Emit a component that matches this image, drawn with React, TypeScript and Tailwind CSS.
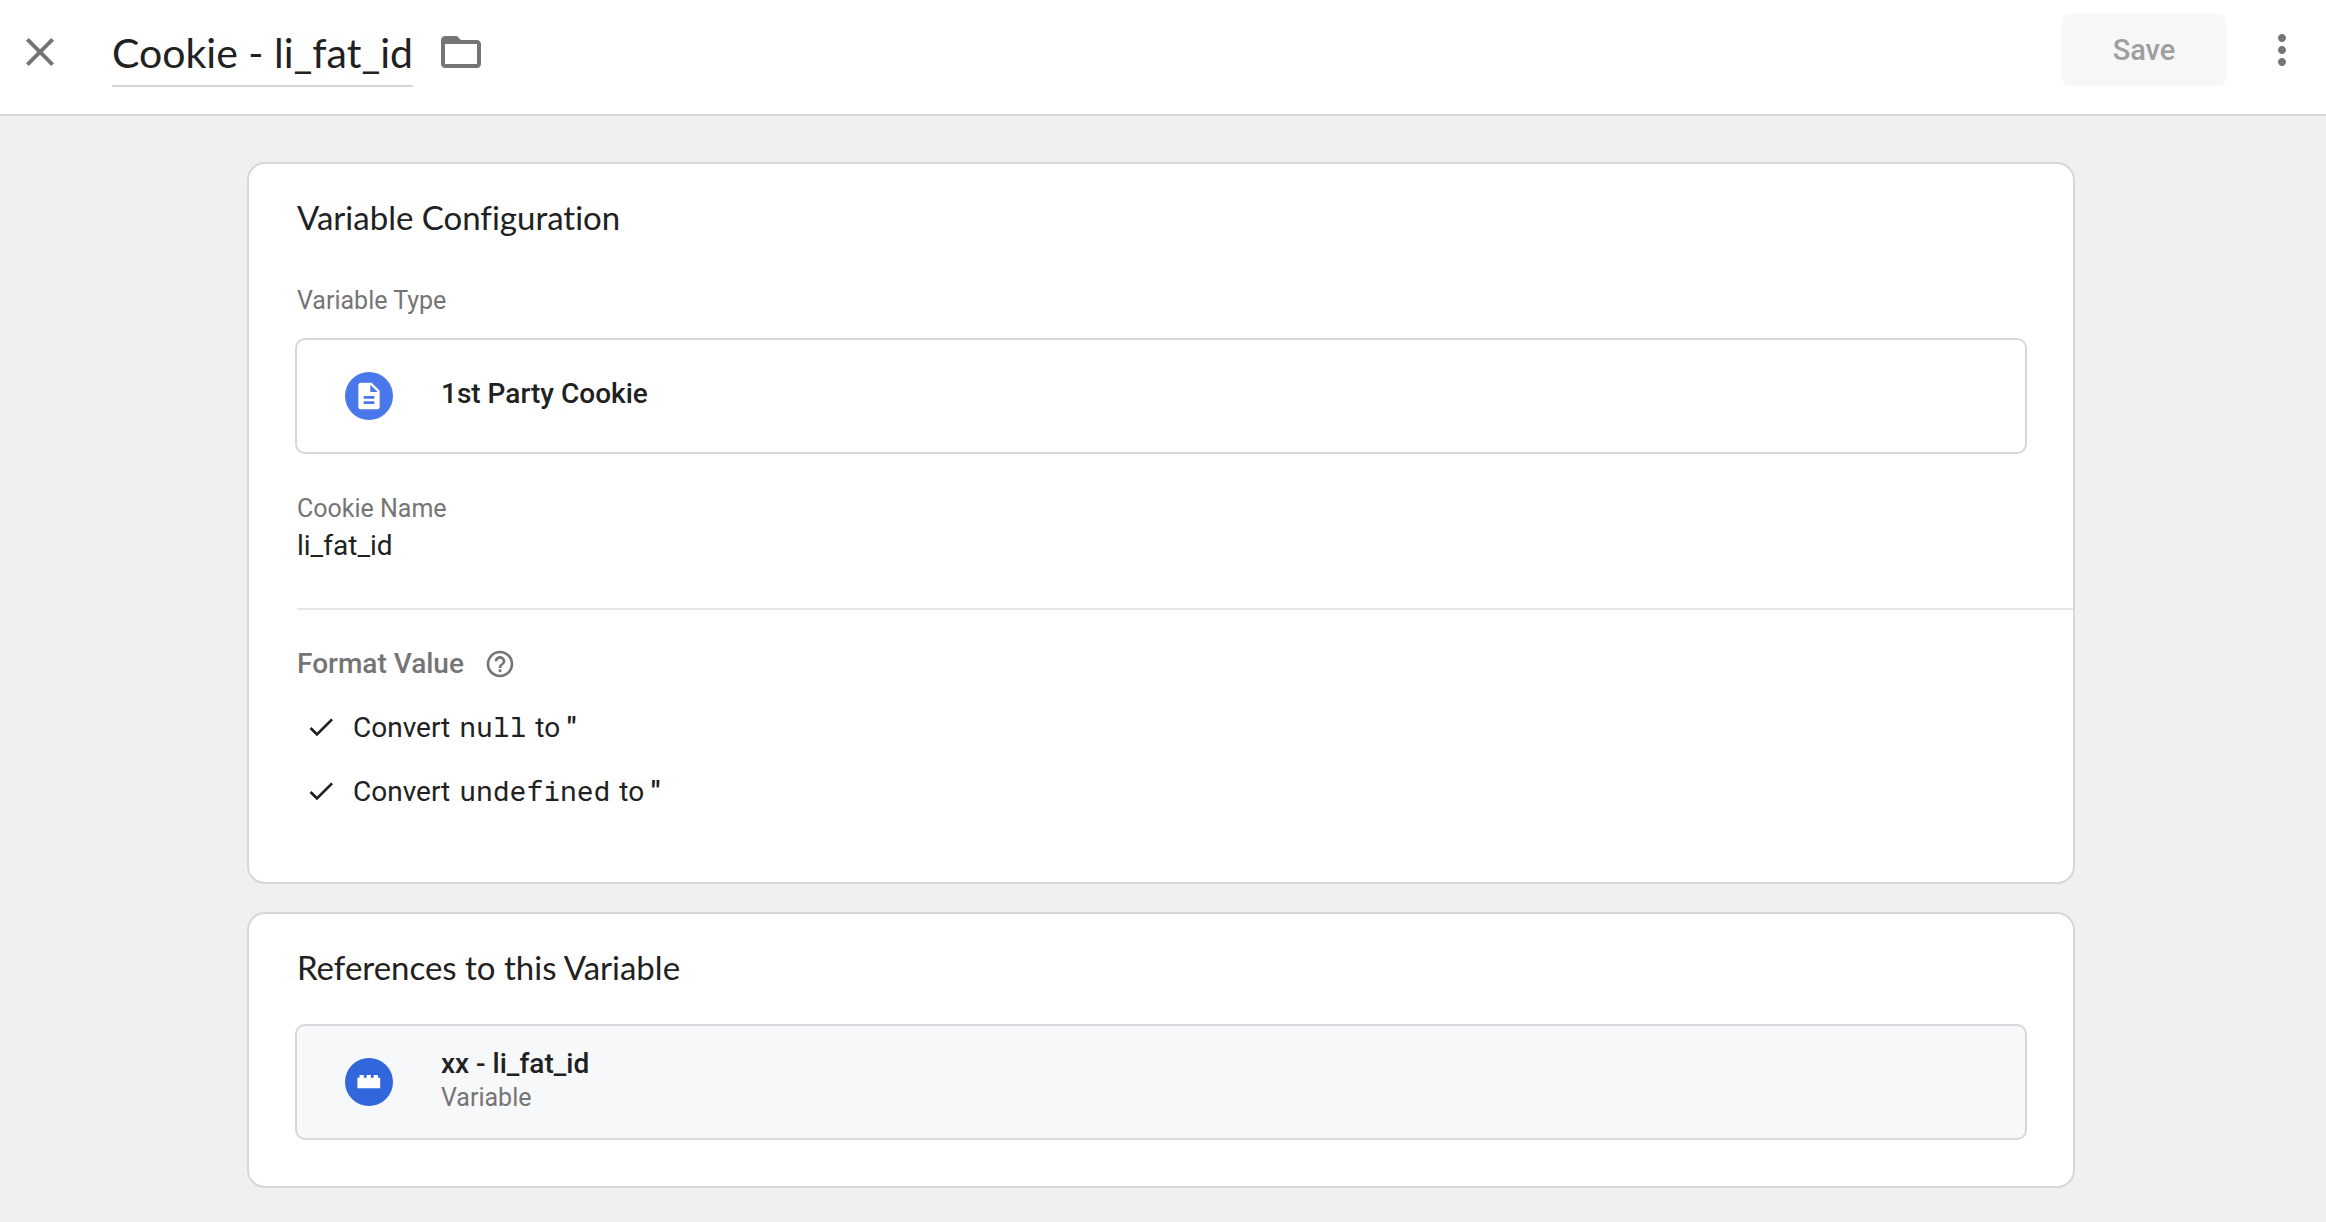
import type { ReactNode } from "react";

function Icon({ path, className }: { path: string; className: string }) {
  return (
    <svg viewBox="0 0 24 24" fill="currentColor" aria-hidden="true" className={`shrink-0 ${className}`}>
      <path d={path} />
    </svg>
  );
}

const icons = {
  close:
    "M19 6.41L17.59 5 12 10.59 6.41 5 5 6.41 10.59 12 5 17.59 6.41 19 12 13.41 17.59 19 19 17.59 13.41 12z",
  folder:
    "M20 6h-8l-2-2H4c-1.1 0-1.99.9-1.99 2L2 18c0 1.1.9 2 2 2h16c1.1 0 2-.9 2-2V8c0-1.1-.9-2-2-2zm0 12H4V8h16v10z",
  more: "M12 8c1.1 0 2-.9 2-2s-.9-2-2-2-2 .9-2 2 .9 2 2 2zm0 2c-1.1 0-2 .9-2 2s.9 2 2 2 2-.9 2-2-.9-2-2-2zm0 6c-1.1 0-2 .9-2 2s.9 2 2 2 2-.9 2-2-.9-2-2-2z",
  document:
    "M14 2H6c-1.1 0-1.99.9-1.99 2L4 20c0 1.1.89 2 1.99 2H18c1.1 0 2-.9 2-2V8l-6-6zm2 16H8v-2h8v2zm0-4H8v-2h8v2zm-3-5V3.5L18.5 9H13z",
  brick: "M3.3 8.9h1.6V6.8h3.2v2.1h2.1V6.8h3.2v2.1h2.1V6.8h3.2v2.1h1.7v7.7H3.3z",
  help: "M11 18h2v-2h-2v2zm1-16C6.48 2 2 6.48 2 12s4.48 10 10 10 10-4.48 10-10S17.52 2 12 2zm0 18c-4.41 0-8-3.59-8-8s3.59-8 8-8 8 3.59 8 8-3.59 8-8 8zm0-14c-2.21 0-4 1.79-4 4h2c0-1.1.9-2 2-2s2 .9 2 2c0 2-3 1.75-3 5h2c0-2.25 3-2.5 3-5 0-2.21-1.79-4-4-4z",
  check: "M9 16.17L4.83 12l-1.42 1.41L9 19 21 7l-1.41-1.41z",
};

function Card({ title, className, children }: { title: string; className: string; children: ReactNode }) {
  return (
    <section className={`rounded-[18px] border-2 border-[#d5d7db] bg-white pt-[33px] ${className}`}>
      <h2 className="px-12 font-['Lato','Open_Sans',sans-serif] text-[33px] leading-10 [font-variant-ligatures:none]">
        {title}
      </h2>
      {children}
    </section>
  );
}

function ItemRow({
  icon,
  badge,
  title,
  subtitle,
  className,
}: {
  icon: string;
  badge: string;
  title: string;
  subtitle?: string;
  className: string;
}) {
  return (
    <button
      type="button"
      className={`mx-[46px] flex h-[116px] items-center gap-12 self-stretch rounded-[10px] border-2 border-[#d5d7db] px-12 text-left ${className}`}
    >
      <span className={`flex size-12 shrink-0 items-center justify-center rounded-full text-white ${badge}`}>
        <Icon path={icon} className="size-8" />
      </span>
      <span className="flex flex-col pb-1">
        <span className="text-[28px] leading-9 font-medium">{title}</span>
        {subtitle && <span className="text-[25px] leading-8 text-[#757575]">{subtitle}</span>}
      </span>
    </button>
  );
}

function FormatRule({ value }: { value: string }) {
  return (
    <li className="flex h-16 items-center gap-4 pl-2">
      <Icon path={icons.check} className="size-8" />
      <span className="text-[28px] leading-9">
        Convert{" "}
        <code className="mx-0.5 font-['Roboto_Mono','Liberation_Mono',monospace] text-[28px]">{value}</code> to{" "}
        <span className="font-bold">"</span>
      </span>
    </li>
  );
}

export default function App() {
  return (
    <div className="flex min-h-screen flex-col bg-[#eff0f2] font-['Roboto',sans-serif] text-[#212121]">
      <header className="flex items-center justify-between border-b-2 border-[#d5d7db] bg-white pt-3.5 pr-5 pb-6 pl-4">
        <div className="flex items-center">
          <button type="button" aria-label="Close" className="text-[#757575]">
            <Icon path={icons.close} className="size-12" />
          </button>
          <input
            aria-label="Variable name"
            defaultValue="Cookie - li_fat_id"
            className="mt-3 ml-12 field-sizing-content border-b-2 border-[#d5d7db] pb-2 font-['Lato','Open_Sans',sans-serif] text-[41px] leading-12 outline-none"
          />
          <button type="button" aria-label="Move to folder" className="ml-6 text-[#757575]">
            <Icon path={icons.folder} className="size-12" />
          </button>
        </div>
        <div className="flex items-center gap-8 pb-1">
          <button
            type="button"
            disabled
            className="h-[72px] w-[164px] rounded-lg bg-[#f7f7f7] pt-0.5 text-[29px] font-medium text-[#9e9e9e]"
          >
            Save
          </button>
          <button type="button" aria-label="More actions" className="text-[#757575]">
            <Icon path={icons.more} className="size-12" />
          </button>
        </div>
      </header>

      <main className="pt-[46px] pr-1 pb-8">
        <div className="mx-auto flex max-w-[1828px] flex-col gap-7">
          <Card title="Variable Configuration" className="flex flex-col pb-[58px]">
            <h3 className="mt-12 px-12 text-[25px] leading-8 text-[#757575]">Variable Type</h3>
            <ItemRow icon={icons.document} badge="bg-[#4a77ea]" title="1st Party Cookie" className="mt-[21px]" />
            <dl className="mt-[39px] px-12">
              <dt className="text-[25px] leading-8 text-[#757575]">Cookie Name</dt>
              <dd className="mt-[3px] text-[28px] leading-9">li_fat_id</dd>
            </dl>
            <div className="mt-11 ml-12 border-t-2 border-[#e5e6ea] pt-9">
              <div className="flex items-center gap-5 text-[#757575]">
                <h3 className="text-[28px] leading-9 font-medium">Format Value</h3>
                <button type="button" aria-label="Help">
                  <Icon path={icons.help} className="size-8" />
                </button>
              </div>
              <ul className="mt-[13px] mb-px">
                <FormatRule value="null" />
                <FormatRule value="undefined" />
              </ul>
            </div>
          </Card>

          <Card title="References to this Variable" className="flex flex-col pb-[46px]">
            <ItemRow
              icon={icons.brick}
              badge="bg-[#3266dd]"
              title="xx - li_fat_id"
              subtitle="Variable"
              className="mt-[37px] bg-[#f7f8fa]"
            />
          </Card>
        </div>
      </main>
    </div>
  );
}
